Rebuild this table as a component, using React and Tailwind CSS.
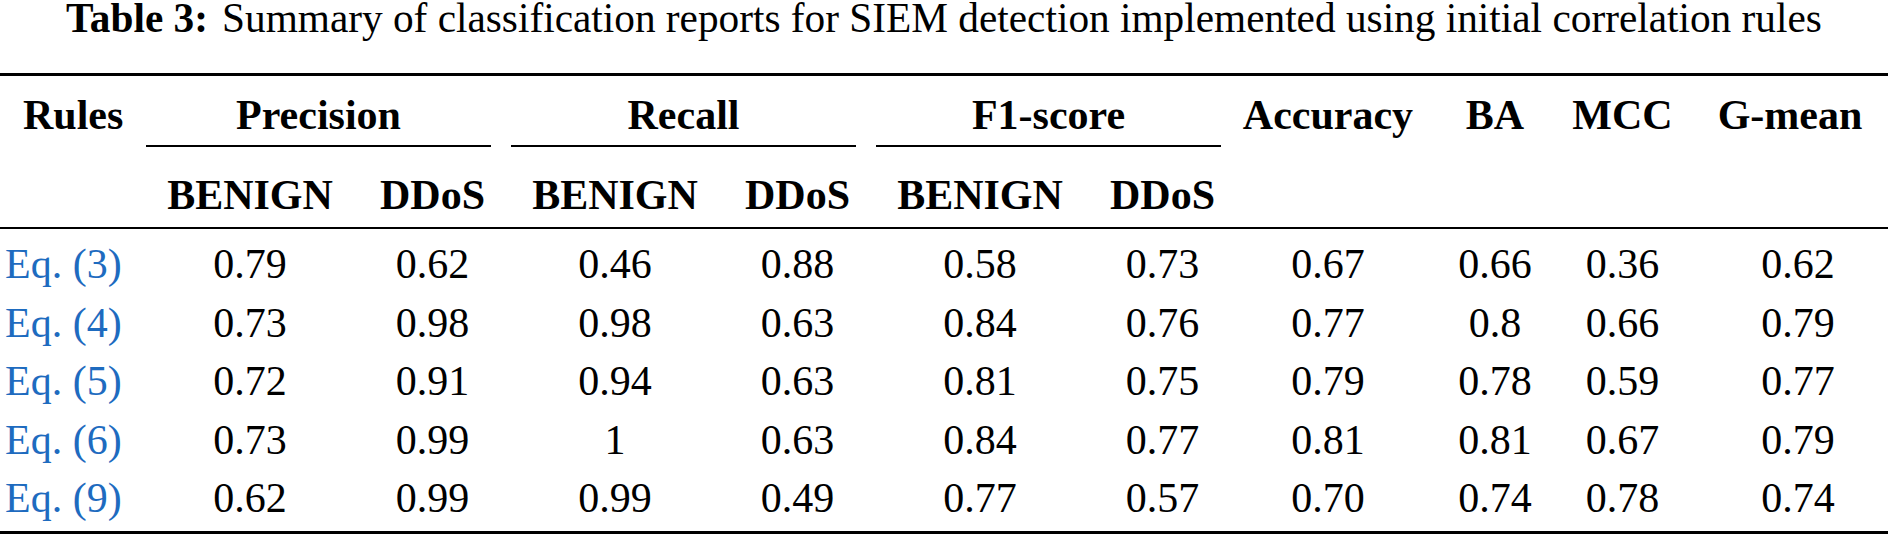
import React from "react";

const rows = [
  ["Eq. (3)", "0.79", "0.62", "0.46", "0.88", "0.58", "0.73", "0.67", "0.66", "0.36", "0.62"],
  ["Eq. (4)", "0.73", "0.98", "0.98", "0.63", "0.84", "0.76", "0.77", "0.8", "0.66", "0.79"],
  ["Eq. (5)", "0.72", "0.91", "0.94", "0.63", "0.81", "0.75", "0.79", "0.78", "0.59", "0.77"],
  ["Eq. (6)", "0.73", "0.99", "1", "0.63", "0.84", "0.77", "0.81", "0.81", "0.67", "0.79"],
  ["Eq. (9)", "0.62", "0.99", "0.99", "0.49", "0.77", "0.57", "0.70", "0.74", "0.78", "0.74"],
];

const cols =
  "grid grid-cols-[136px_228px_137px_228px_137px_228px_137px_194px_140px_115px_208px]";

function Group({ label }) {
  return (
    <div className="col-span-2 pt-[18px]">
      <div className="text-center leading-[42px] font-bold">{label}</div>
      <div className="mx-[10px] mt-[9px] h-[2px] bg-black" />
    </div>
  );
}

function Solo({ label, extra = "" }) {
  return (
    <div className={`row-span-2 pt-[18px] leading-[42px] font-bold text-center ${extra}`}>
      {label}
    </div>
  );
}

function Sub({ label }) {
  return <div className="pt-[27px] leading-[42px] font-bold text-center">{label}</div>;
}

export default function App() {
  return (
    <div
      className="w-[1888px] h-[537px] bg-white text-black overflow-hidden"
      style={{ fontFamily: '"Liberation Serif", "Times New Roman", serif' }}
    >
      <div className="h-[36px] leading-[36px] text-center text-[41.3px] whitespace-nowrap">
        <span className="font-bold">Table 3:</span>
        <span className="ml-[14px]">
          Summary of classification reports for SIEM detection implemented using initial correlation rules
        </span>
      </div>

      <div className="mt-[37px] h-[3px] bg-black" />

      <div className={`${cols} text-[42px] h-[151px] grid-rows-[71px_80px]`}>
        <div className="row-span-2 pt-[18px] pl-[23px] leading-[42px] font-bold text-left">Rules</div>
        <Group label="Precision" />
        <Group label="Recall" />
        <Group label="F1-score" />
        <Solo label="Accuracy" />
        <Solo label="BA" />
        <Solo label="MCC" />
        <Solo label="G-mean" extra="pl-[12px]" />
        <Sub label="BENIGN" />
        <Sub label="DDoS" />
        <Sub label="BENIGN" />
        <Sub label="DDoS" />
        <Sub label="BENIGN" />
        <Sub label="DDoS" />
      </div>

      <div className="h-[2px] bg-black" />

      <div className="pt-[6px] text-[42px]">
        {rows.map((r, i) => (
          <div
            key={i}
            className={`${cols} ${i % 2 === 0 ? "leading-[59px]" : "leading-[58px]"}`}
          >
            <div className="pl-[5px] text-left text-[#1e6bbf] whitespace-nowrap">{r[0]}</div>
            {r.slice(1).map((v, j) => (
              <div key={j} className={`text-center ${j === 9 ? "pl-[28px]" : ""}`}>
                {v}
              </div>
            ))}
          </div>
        ))}
      </div>

      <div className="mt-[3px] h-[3px] bg-black" />
    </div>
  );
}
